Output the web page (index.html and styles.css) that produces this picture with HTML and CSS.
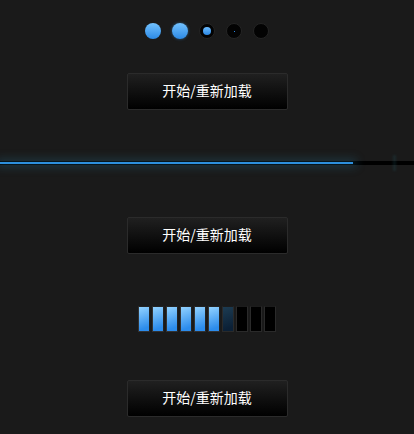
FILE: index.html
```html
<!DOCTYPE html>
<html lang="zh">
<head>
<meta charset="utf-8">
<title>加载动画</title>
<link rel="stylesheet" href="styles.css">
</head>
<body>
  <section class="demo demo-dots">
    <div class="dots">
      <span class="dot dot-on"></span>
      <span class="dot dot-on dot-glow"></span>
      <span class="dot dot-mid"></span>
      <span class="dot dot-low"></span>
      <span class="dot"></span>
    </div>
    <button class="btn">开始/重新加载</button>
  </section>

  <section class="demo demo-line">
    <div class="track">
      <div class="track-fill" style="width:353px"></div>
      <span class="track-spark"></span>
    </div>
    <button class="btn">开始/重新加载</button>
  </section>

  <section class="demo demo-bars">
    <div class="bars">
      <span class="bar bar-on"></span>
      <span class="bar bar-on"></span>
      <span class="bar bar-on"></span>
      <span class="bar bar-on"></span>
      <span class="bar bar-on"></span>
      <span class="bar bar-on"></span>
      <span class="bar bar-half"></span>
      <span class="bar"></span>
      <span class="bar"></span>
      <span class="bar"></span>
    </div>
    <button class="btn">开始/重新加载</button>
  </section>
</body>
</html>
```

FILE: styles.css
```css
html, body {
  margin: 0;
  padding: 0;
  background: #1a1a1a;
  height: 434px;
  overflow: hidden;
  font-family: "Noto Sans CJK SC", "Noto Sans", sans-serif;
}

.demo {
  display: flex;
  flex-direction: column;
  align-items: center;
}

/* buttons */
.btn {
  box-sizing: border-box;
  width: 161px;
  height: 37px;
  margin: 0;
  padding: 0 0 4px;
  border: 1px solid #2b2b2b;
  border-radius: 2px;
  background: linear-gradient(#202020, #000 100%);
  color: #fff;
  font-family: "Noto Sans CJK SC", sans-serif;
  font-size: 14px;
  line-height: 30px;
  cursor: pointer;
}

/* dots */
.demo-dots { padding-top: 23px; }
.dots {
  display: flex;
  gap: 11px;
  height: 16px;
  margin-bottom: 34px;
}
.dot {
  box-sizing: border-box;
  width: 16px;
  height: 16px;
  border-radius: 50%;
  background: #030303;
  border: 1px solid #242424;
  display: flex;
  align-items: center;
  justify-content: center;
}
.dot-on {
  border: none;
  background: linear-gradient(#72c2ff, #2c8ae6);
}
.dot-glow { box-shadow: 0 0 3px rgba(60, 160, 240, 0.5); }
.dot-mid::after {
  content: "";
  width: 8px;
  height: 8px;
  border-radius: 50%;
  background: linear-gradient(#6cbcff, #2a86e2);
}
.dot-low::after {
  content: "";
  width: 1px;
  height: 1px;
  background: #2a86e2;
}

/* line */
.demo-line { padding-top: 51px; }
.track {
  position: relative;
  width: 100%;
  height: 4px;
  background: #000;
  margin-bottom: 52px;
}
.track-fill {
  height: 2px;
  margin-top: 1px;
  background: #2d8fdc;
  box-shadow: 0 0 8px 4px rgba(40, 120, 150, 0.25);
}
.track-spark {
  position: absolute;
  left: 393px;
  top: -6px;
  width: 3px;
  height: 16px;
  background: rgba(40, 110, 130, 0.18);
  filter: blur(1px);
}

/* bars */
.demo-bars { padding-top: 52px; }
.bars {
  display: flex;
  gap: 2px;
  margin-bottom: 48px;
}
.bar {
  box-sizing: border-box;
  width: 12px;
  height: 26px;
  background: #000;
  border: 1px solid #2a2a2a;
  border-top-color: #1c1c1c;
}
.bar-on {
  background: linear-gradient(160deg, #92d2ff, #2c8cec 85%);
  border-color: #222;
  border-left-color: #333;
  border-bottom-color: #333;
}
.bar-half {
  background: linear-gradient(160deg, #1d3c52, #0b2036 85%);
}
```
